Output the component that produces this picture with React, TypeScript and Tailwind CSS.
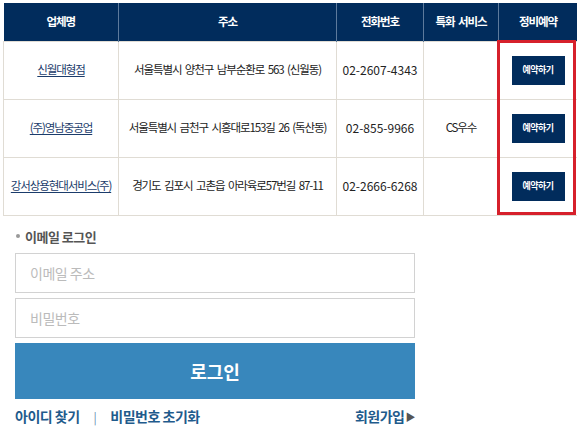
const font = { fontFamily: '"Noto Sans CJK KR", "Noto Sans", sans-serif' };

const rows = [
  { name: "신월대형점", addr: "서울특별시 양천구 남부순환로 563 (신월동)", tel: "02-2607-4343", svc: "" },
  { name: "(주)영남중공업", addr: "서울특별시 금천구 시흥대로153길 26 (독산동)", tel: "02-855-9966", svc: "CS우수" },
  { name: "강서상용현대서비스(주)", addr: "경기도 김포시 고촌읍 아라육로57번길 87-11", tel: "02-2666-6268", svc: "" },
];

const heads = [
  { label: "업체명", w: "w-[115px]" },
  { label: "주소", w: "w-[218px]" },
  { label: "전화번호", w: "w-[87px]" },
  { label: "특화 서비스", w: "w-[75px]" },
  { label: "정비예약", w: "w-[79px]" },
];

export default function App() {
  return (
    <div className="relative w-[577px] h-[438px] overflow-hidden bg-white" style={font}>
      <div className="pl-[3px] pt-[3px]">
        <table className="w-[574px] table-fixed border-collapse text-[11.5px] tracking-[-1.1px] [word-spacing:2px]">
          <thead>
            <tr className="h-[38px] bg-[#012c5c]">
              {heads.map((h) => (
                <th
                  key={h.label}
                  className={`${h.w} border-x border-[#5d7a9c] font-bold text-white first:border-l-0`}
                >
                  {h.label}
                </th>
              ))}
            </tr>
          </thead>
          <tbody>
            {rows.map((r) => (
              <tr key={r.name} className="h-[58px] text-center text-[#222]">
                <td className="border border-[#e0dcd4]">
                  <a className="text-[#1b3c6b] underline underline-offset-2">{r.name}</a>
                </td>
                <td className="border border-[#e0dcd4]">{r.addr}</td>
                <td className="border border-[#e0dcd4] text-[12px] tracking-[0px]">{r.tel}</td>
                <td className="border border-[#e0dcd4]">{r.svc}</td>
                <td className="border border-[#e0dcd4]">
                  <span className="mx-auto flex h-[29px] w-[53px] items-center justify-center bg-[#012c5c] text-[9px] font-bold tracking-[-0.5px] text-white">
                    예약하기
                  </span>
                </td>
              </tr>
            ))}
          </tbody>
        </table>
      </div>

      <div className="absolute left-[497px] top-[40px] h-[175px] w-[79px] border-[3px] border-[#d6202b]" />

      <div className="mt-[11px] w-[400px] ml-[15px]">
        <div className="flex items-center gap-[5px] pl-px text-[13px] font-bold tracking-[-0.5px] text-[#555]">
          <span className="h-[4px] w-[4px] rounded-full bg-[#999]" />
          이메일 로그인
        </div>
        <div className="mt-[7px] flex flex-col gap-[5px]">
          <div className="flex h-[40px] items-center border border-[#d2d2d2] px-[14px] text-[14px] tracking-[-0.5px] text-[#bbb]">
            이메일 주소
          </div>
          <div className="flex h-[40px] items-center border border-[#d2d2d2] px-[14px] text-[14px] tracking-[-0.5px] text-[#bbb]">
            비밀번호
          </div>
          <div className="flex h-[56px] items-center justify-center bg-[#3887bc] text-[18px] font-bold text-white">
            로그인
          </div>
        </div>
        <div className="mt-[7px] flex items-center justify-between text-[14px] font-bold tracking-[-0.5px] text-[#1f5b8c]">
          <div className="flex items-center">
            <span>아이디 찾기</span>
            <span className="mx-[14px] text-[12px] font-normal text-[#6a8fb0]">|</span>
            <span>비밀번호 초기화</span>
          </div>
          <div className="flex items-center">
            회원가입
            <span className="ml-px text-[10px] text-[#555]">▶</span>
          </div>
        </div>
      </div>
    </div>
  );
}
